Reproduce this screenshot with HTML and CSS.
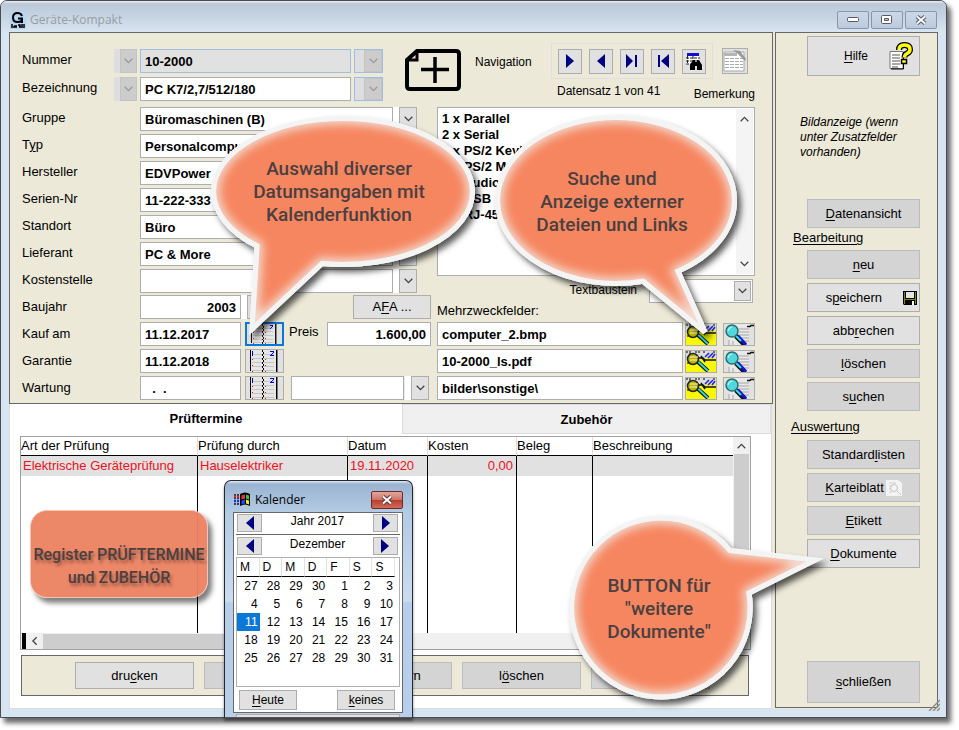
FILE: index.html
```html
<!DOCTYPE html>
<html lang="de">
<head>
<meta charset="utf-8">
<title>Geräte-Kompakt</title>
<link rel="stylesheet" href="styles.css">
</head>
<body>
<svg class="defs" aria-hidden="true">
  <symbol id="chev" viewBox="0 0 9 6"><path d="M.7.8 4.500 4.600 8.300.8" fill="none" stroke="currentColor" stroke-width="1.300"/></symbol>
  <symbol id="tri" viewBox="0 0 8 14"><path d="M0 0 8 7 0 14z" fill="#000082"/></symbol>
  <symbol id="book" viewBox="0 0 31 22" shape-rendering="crispEdges">
    <path d="M2 0h26v22H2z" fill="#e6e6e6"/>
    <path d="M3 4.500h22M3 8.500h22M3 12.500h22M3 16.500h22M3 20.500h22" stroke="#c4c4c4"/>
    <path d="M1.500 0v21M27.500 0v22" stroke="#000"/><path d="M28.500 0v22" stroke="#777"/>
    <path d="M13.500 0v22" stroke="#000" stroke-dasharray="2 2"/><path d="M14.500 2v20" stroke="#000" stroke-dasharray="2 2"/>
    <path d="M3.500 9v13M16.500 9v13" stroke="#e01818" stroke-dasharray="1 5"/>
    <path d="M3.500 1v5" stroke="#00f"/><path d="M21 1h4v1h-4zM24 2h1v1h-1zM23 3h1v1h-1zM22 4h1v1h-1zM21 5h4v1h-4z" fill="#0000f0"/>
  </symbol>
  <symbol id="find" viewBox="0 0 30 21">
    <rect width="30" height="21" fill="#f8f800"/><path d="M0 0h30v7H16l-4 3H0z" fill="#dcdcdc"/>
    <path d="M0 1h6M9 1h5M17 1h2M27 1h3M1 12h3M3 3h2" stroke="#000" stroke-dasharray="2 1"/>
    <circle cx="7" cy="8" r="5.500" fill="#b9b500" stroke="#222" stroke-width="1.500"/>
    <path d="M4 6h8M4 9h7" stroke="#f6f6d0"/><path d="M13 7h4l2 2h11M15 5l4 6" stroke="#111" fill="none" stroke-width="1.500"/>
    <path d="m12 11 10 9" stroke="#111" stroke-width="4"/><path d="m12.500 11 9.500 9" stroke="#35d6d6" stroke-width="2"/>
    <path d="m19 6 4-4M22 7l5-5M26 7l3-4" stroke="#2222d8" stroke-width="1.500"/>
  </symbol>
  <symbol id="view" viewBox="0 0 30 21">
    <path d="M5 0h20v21H5z" fill="#e9e9e9"/>
    <path d="M14 5h11M15 8h10M15 11h10M17 14h8M20 17h5M5 16v5M9 17v4" stroke="#a5a5a5"/>
    <path d="M23 2.500h3l1-1h3" stroke="#111" stroke-width="1.500" fill="none"/>
    <path d="m12 12 9 9" stroke="#111" stroke-width="5"/><path d="m14 12 8 9" stroke="#1414e0" stroke-width="3"/><path d="m12 12 5 5" stroke="#35e0e0" stroke-width="2"/>
    <circle cx="8" cy="7" r="6" fill="#52d8dc" stroke="#2b6d70" stroke-width="1.500"/><path d="M4 7q1-4 4-4" stroke="#d9ffff" fill="none"/>
  </symbol>
</svg>

<div class="stage">
<main class="window">
  <header class="titlebar">
    <svg class="app-icon" viewBox="0 0 16 18"><path d="M0 1h16v17H0z" fill="#b4d6f4"/><path d="M12 5Q11 2 7.500 2 3 2 3 6.500T7.500 11Q12 11 12 7.500H8M12 7v5" fill="none" stroke="#000" stroke-width="2"/><path d="M1 14h2M4 15h3M8 14h2v2M11 14h4M1 16h6M9 16h6" stroke="#000" stroke-width="1.500"/></svg>
    <h1>Geräte-Kompakt</h1>
    <div class="winbtns">
      <button aria-label="Minimieren"><svg width="12" height="6"><rect x=".5" y=".5" width="11" height="4" rx="1" fill="#fff" stroke="#555a66"/></svg></button>
      <button aria-label="Maximieren"><svg width="12" height="10"><rect x=".5" y=".5" width="10" height="8" rx="1" fill="#fff" stroke="#555a66"/><path d="M3.500 3.500h4v2h-4z" fill="#b8c6d8" stroke="#555a66"/></svg></button>
      <button aria-label="Schließen"><svg width="12" height="10" viewBox="0 0 12 10"><path d="m2 1.500 8 7m0-7-8 7" stroke="#555a66" stroke-width="4"/><path d="m2 1.500 8 7m0-7-8 7" stroke="#fff" stroke-width="1.800"/></svg></button>
    </div>
  </header>

  <div class="client">
    <div class="main">
      <section class="form">
        <div class="top">
          <div class="ident">
            <label for="nummer">Nummer</label>
            <span class="drop off"><select aria-label="Nummernliste"></select><svg><use href="#chev"/></svg></span>
            <input id="nummer" class="focus" value="10-2000">
            <span class="drop off blue"><select aria-label="Nummer wählen"></select><svg><use href="#chev"/></svg></span>
            <label for="bez">Bezeichnung</label>
            <span class="drop off"><select aria-label="Bezeichnungsliste"></select><svg><use href="#chev"/></svg></span>
            <input id="bez" value="PC K7/2,7/512/180">
            <span class="drop off blue"><select aria-label="Bezeichnung wählen"></select><svg><use href="#chev"/></svg></span>
          </div>
          <svg class="newcard" viewBox="0 0 56 42"><path d="M12 2h39q3 0 3 3v32q0 3-3 3H5q-3 0-3-3V11z" fill="none" stroke="#000" stroke-width="4"/><path d="M3 11h9V3" fill="none" stroke="#000" stroke-width="3"/><path d="M16 20.500h28M30 8v26" stroke="#000" stroke-width="3.500"/></svg>
          <span class="navlabel">Navigation</span>
          <div class="nav">
            <div class="navrow">
              <div class="navbox">
                <button aria-label="Vor"><svg width="8" height="14"><use href="#tri"/></svg></button>
                <button aria-label="Zurück"><svg class="flip" width="8" height="14"><use href="#tri"/></svg></button>
                <button aria-label="Letzter"><svg width="12" height="14"><path d="M0 0 7 7 0 14zM9 1h2v12H9z" fill="#000082"/></svg></button>
                <button aria-label="Erster"><svg width="12" height="14"><path d="M12 0 4 7l8 7zM1 1h2v12H1z" fill="#000082"/></svg></button>
                <button aria-label="Suchen"><svg width="18" height="17" viewBox="0 0 18 17"><path d="M2 1h12v10H1z" fill="#fff"/><path d="M2 0h12v3H2z" fill="#11c"/><path d="M1 5h14M1 8h12M1 11h6M2.500 3v8M8 3v5" stroke="#222" stroke-dasharray="3 1"/><path d="M5 17v-5l3-5h2v2h2V7h2l3 5v5h-5v-4h-2v4z"/></svg></button>
              </div>
              <button class="notebtn" aria-label="Bemerkung"><svg width="24" height="24" viewBox="0 0 24 24"><path d="M1 3h20v19H1z" fill="#fff" stroke="#a7a7a7"/><path d="M1 4h13v3H1z" fill="#b5b5b5"/><path d="M2 9.500h18M2 12.500h18M2 15.500h18M2 18.500h18" stroke="#aaa" stroke-dasharray="4 1"/><path d="m10 1 7 1 6 8-1 2-7-7z" fill="#999"/></svg></button>
            </div>
            <div class="navtext"><span>Datensatz 1 von 41</span><span class="bem">Bemerkung</span></div>
          </div>
        </div>

        <div class="fields">
          <div class="left">
            <div class="row"><label for="f1">Gruppe</label><input id="f1" class="wide" value="Büromaschinen (B)"><span class="drop"><select aria-label="Gruppen"></select><svg><use href="#chev"/></svg></span></div>
            <div class="row"><label for="f2">T<u>y</u>p</label><input id="f2" class="wide" value="Personalcomputer"><span class="drop"><select aria-label="Typen"></select><svg><use href="#chev"/></svg></span></div>
            <div class="row"><label for="f3">Hersteller</label><input id="f3" class="wide" value="EDVPower"><span class="drop"><select aria-label="Herstellerliste"></select><svg><use href="#chev"/></svg></span></div>
            <div class="row"><label for="f4">Serien-Nr</label><input id="f4" class="wide" value="11-222-333"></div>
            <div class="row"><label for="f5">Standort</label><input id="f5" class="wide" value="Büro"><span class="drop"><select aria-label="Standorte"></select><svg><use href="#chev"/></svg></span></div>
            <div class="row"><label for="f6">Lieferant</label><input id="f6" class="wide" value="PC &amp; More"><span class="drop"><select aria-label="Lieferanten"></select><svg><use href="#chev"/></svg></span></div>
            <div class="row last"><label for="f7">Kostenstelle</label><input id="f7" class="wide" value=""><span class="drop"><select aria-label="Kostenstellen"></select><svg><use href="#chev"/></svg></span></div>
            <div class="row low"><label for="f8">Baujahr</label><input id="f8" class="short num" value="2003"><span class="drop"><select aria-label="Baujahre"></select><svg><use href="#chev"/></svg></span><button class="afa">A<u>F</u>A ...</button></div>
            <div class="row low"><label for="f9">Kauf am</label><input id="f9" class="short" value="11.12.2017"><button class="cal on" aria-label="Kalender Kauf"><svg><use href="#book"/></svg></button><label class="preis" for="preis">Preis</label><input id="preis" class="num price" value="1.600,00"></div>
            <div class="row low"><label for="f10">Garantie</label><input id="f10" class="short" value="11.12.2018"><button class="cal" aria-label="Kalender Garantie"><svg><use href="#book"/></svg></button></div>
            <div class="row low"><label for="f11">Wartung</label><input id="f11" class="short" value="  .  ."><button class="cal" aria-label="Kalender Wartung"><svg><use href="#book"/></svg></button><span class="interval"><input aria-label="Intervall" value=""><span class="drop"><select aria-label="Intervalle"></select><svg><use href="#chev"/></svg></span></span></div>
          </div>
          <div class="right">
            <div class="memo">
              <textarea aria-label="Bemerkung">1 x Parallel
2 x Serial
1 x PS/2 Keyboard
1 x PS/2 Maus
1 x Audio
2 x USB
1 x RJ-45</textarea>
              <div class="vbar"><svg class="flipv"><use href="#chev"/></svg><svg><use href="#chev"/></svg></div>
            </div>
            <div class="baustein"><label for="tb">Textbaustein</label><span class="combo"><select id="tb"></select><i><svg><use href="#chev"/></svg></i></span></div>
            <span class="mz">Mehrzweckfelder:</span>
            <div class="row file"><input aria-label="Mehrzweckfeld 1" value="computer_2.bmp"><button aria-label="Suchen"><svg><use href="#find"/></svg></button><button aria-label="Anzeigen"><svg><use href="#view"/></svg></button></div>
            <div class="row file"><input aria-label="Mehrzweckfeld 2" value="10-2000_ls.pdf"><button aria-label="Suchen"><svg><use href="#find"/></svg></button><button aria-label="Anzeigen"><svg><use href="#view"/></svg></button></div>
            <div class="row file"><input aria-label="Mehrzweckfeld 3" value="bilder\sonstige\"><button aria-label="Suchen"><svg><use href="#find"/></svg></button><button aria-label="Anzeigen"><svg><use href="#view"/></svg></button></div>
          </div>
        </div>
      </section>

      <section class="tabs">
        <div class="tablist"><button class="tab active">Prüftermine</button><button class="tab">Zubehör</button></div>
        <div class="gridbox">
          <div class="gridtop">
            <table class="tests">
              <colgroup><col class="c1"><col class="c2"><col class="c3"><col class="c4"><col class="c5"><col></colgroup>
              <thead><tr><th>Art der Prüfung</th><th>Prüfung durch</th><th>Datum</th><th>Kosten</th><th>Beleg</th><th>Beschreibung</th></tr></thead>
              <tbody><tr class="hit"><td>Elektrische Geräteprüfung</td><td>Hauselektriker</td><td>19.11.2020</td><td class="r">0,00</td><td></td><td></td></tr>
              <tr class="fill"><td></td><td></td><td></td><td></td><td></td><td></td></tr></tbody>
            </table>
            <div class="vscroll"><svg class="flipv"><use href="#chev"/></svg><div></div></div>
          </div>
          <div class="hscroll"><b></b><svg><use href="#chev"/></svg><div></div></div>
        </div>
        <div class="actions"><button>dru<u>c</u>ken</button><button class="dim"><u>n</u>eu</button><button class="dim">s<u>p</u>eichern</button><button class="dim">l<u>ö</u>schen</button><button class="dim" aria-label="Weitere"></button></div>
      </section>
    </div>

    <aside class="side">
      <button class="sb help"><span><u>H</u>ilfe</span><svg width="24" height="28" viewBox="0 0 24 28"><path d="M1 9.500h13v17H1z" fill="#fff" stroke="#777"/><path d="M3 13h8M3 16h8M3 19h8M3 22h8M3 25h6" stroke="#555"/><path d="M14.500 10v17H2" fill="none" stroke="#000"/><path d="M10 8Q10 3 15.500 3T21 7.500Q21 10 18 11.500 15.500 12.500 15.500 15.500" fill="none" stroke="#000" stroke-width="6"/><path d="M10 8Q10 3 15.500 3T21 7.500Q21 10 18 11.500 15.500 12.500 15.500 15.500" fill="none" stroke="#ff0" stroke-width="3.500"/><path d="M12.500 17.500h5v4h-5z" fill="#ff0" stroke="#000" stroke-width="1.500"/></svg></button>
      <p class="hint">Bildanzeige (wenn unter Zusatzfelder vorhanden)</p>
      <button class="sb dim"><span><u>D</u>atenansicht</span></button>
      <h2>Bearbeitung</h2>
      <div class="stack">
        <button class="sb dim"><span><u>n</u>eu</span></button>
        <button class="sb save"><span>s<u>p</u>eichern</span><svg width="14" height="14" viewBox="0 0 14 14"><path d="M0 0h14v14H1l-1-1z"/><path d="M1 1h1v12H1zM12 1h1v12h-1z" fill="#8a8500"/><path d="M3 1h8v6H3z" fill="#e4e4e4"/><path d="M1 8h12v1H1z" fill="#8a8500"/><path d="M9 10h2v4H9z" fill="#fff"/></svg></button>
        <button class="sb"><span>abb<u>r</u>echen</span></button>
        <button class="sb dim"><span><u>l</u>öschen</span></button>
        <button class="sb dim"><span>s<u>u</u>chen</span></button>
      </div>
      <h2>Auswertung</h2>
      <div class="stack">
        <button class="sb dim"><span>Standard<u>l</u>isten</span></button>
        <button class="sb dim"><span><u>K</u>arteiblatt</span><svg width="16" height="16" viewBox="0 0 16 16"><path d="M0 0h12l4 3v13H0z" fill="#f3f3f3"/><path d="M3 3h7M3 6h3M3 9h2M3 12h3" stroke="#cfcfcf"/><circle cx="8" cy="8" r="3.500" fill="none" stroke="#c5c5c5"/><path d="m11 11 4 4" stroke="#c5c5c5"/></svg></button>
        <button class="sb dim"><span><u>E</u>tikett</span></button>
        <button class="sb"><span><u>D</u>okumente</span></button>
      </div>
      <button class="sb dim close"><span><u>s</u>chließen</span></button>
    </aside>
  </div>
  <svg class="grip" viewBox="0 0 12 12"><path d="M1 12 12 1M5 12l7-7M9 12l3-3" stroke="#8d8d86" stroke-width="1.500"/></svg>
</main>

<section class="dialog" role="dialog" aria-label="Kalender">
  <header><svg width="17" height="15" viewBox="0 0 17 15"><path d="M0 3h6M0 6h6M0 12h6" stroke="#111" stroke-dasharray="2 1" stroke-width="1.500"/><path d="M0 4.500h6" stroke="#e22" stroke-dasharray="2 1" stroke-width="2"/><path d="M0 9h6" stroke="#22e" stroke-dasharray="2 1" stroke-width="2.500"/><path d="M6 2q5-3 10 0v12q-5-3-10 0z"/><path d="M7.500 3.500 11 2.500v4l-3.500 1z" fill="#e33"/><path d="m12 2.500 3 1v4l-3-1z" fill="#3c3"/><path d="m7.500 8.500 3.500-1v4l-3.500 1z" fill="#24f"/><path d="m12 7.500 3 1v4l-3-1z" fill="#ee2"/></svg><h2>Kalender</h2><button aria-label="Schließen"><svg width="12" height="10" viewBox="0 0 12 10"><path d="m2 1.500 8 7m0-7-8 7" stroke="#5a3a3a" stroke-width="4"/><path d="m2 1.500 8 7m0-7-8 7" stroke="#fff" stroke-width="2"/></svg></button></header>
  <div class="calbody">
    <div class="pick"><button aria-label="Jahr zurück"><svg class="flip" width="8" height="14"><use href="#tri"/></svg></button><span>Jahr 2017</span><button aria-label="Jahr vor"><svg width="8" height="14"><use href="#tri"/></svg></button></div>
    <div class="pick month"><button aria-label="Monat zurück"><svg class="flip" width="8" height="14"><use href="#tri"/></svg></button><span>Dezember</span><button aria-label="Monat vor"><svg width="8" height="14"><use href="#tri"/></svg></button></div>
    <div class="calgrid">
      <table>
        <thead><tr><th>M</th><th>D</th><th>M</th><th>D</th><th>F</th><th>S</th><th>S</th></tr></thead>
        <tbody>
        <tr><td>27</td><td>28</td><td>29</td><td>30</td><td>1</td><td>2</td><td>3</td></tr>
        <tr><td>4</td><td>5</td><td>6</td><td>7</td><td>8</td><td>9</td><td>10</td></tr>
        <tr><td class="sel">11</td><td>12</td><td>13</td><td>14</td><td>15</td><td>16</td><td>17</td></tr>
        <tr><td>18</td><td>19</td><td>20</td><td>21</td><td>22</td><td>23</td><td>24</td></tr>
        <tr><td>25</td><td>26</td><td>27</td><td>28</td><td>29</td><td>30</td><td>31</td></tr>
        </tbody>
      </table>
    </div>
    <div class="calbtns"><button><u>H</u>eute</button><button><u>k</u>eines</button></div>
  </div>
  <div class="strip"></div>
</section>

<svg class="bubbles" viewBox="0 0 959 730" aria-hidden="true">
  <defs>
    <filter id="sh" x="-20%" y="-20%" width="150%" height="150%"><feDropShadow dx="4" dy="5" stdDeviation="3" flood-color="#000" flood-opacity=".65"/></filter>
    <filter id="bl" x="-20%" y="-20%" width="140%" height="140%"><feGaussianBlur stdDeviation="5"/></filter>
    <path id="p1" d="M257 246 252 329 322 263.500A129.500 73 0 0 0 472.500 191.500 129.500 73 0 0 0 343 118.500 129.500 73 0 0 0 213.500 191.500 129.500 73 0 0 0 257 246Z"/>
    <path id="p2" d="M643 281.300 705 332 678 271.200A118.500 83 0 0 0 734.500 200.500 118.500 83 0 0 0 616 117.500 118.500 83 0 0 0 497.500 200.500 118.500 83 0 0 0 643 281.300Z"/>
    <path id="p3" d="M730 550.500 815 560 749 593A89.500 89.500 0 0 1 661 697 89.500 89.500 0 0 1 571.500 607.500 89.500 89.500 0 0 1 661 518 89.500 89.500 0 0 1 730 550.500Z"/>
    <clipPath id="k1"><use href="#p1"/></clipPath><clipPath id="k2"><use href="#p2"/></clipPath><clipPath id="k3"><use href="#p3"/></clipPath>
  </defs>
  <g fill="#f68660">
    <use href="#p1" filter="url(#sh)" stroke="#f4f4f4" stroke-width="5"/><use href="#p2" filter="url(#sh)" stroke="#f4f4f4" stroke-width="5"/><use href="#p3" filter="url(#sh)" stroke="#f4f4f4" stroke-width="5"/>
  </g>
  <g fill="none" stroke="#f3dcd2" stroke-width="12">
    <g clip-path="url(#k1)"><use href="#p1" filter="url(#bl)"/></g><g clip-path="url(#k2)"><use href="#p2" filter="url(#bl)"/></g><g clip-path="url(#k3)"><use href="#p3" filter="url(#bl)"/></g>
  </g>
  <g fill="none" stroke="#f4f4f4" stroke-width="5"><use href="#p1"/><use href="#p2"/><use href="#p3"/></g>
</svg>
<p class="note n1">Auswahl diverser<br>Datumsangaben mit<br>Kalenderfunktion</p>
<p class="note n2">Suche und<br>Anzeige externer<br>Dateien und Links</p>
<p class="note n3">BUTTON für<br>"weitere<br>Dokumente"</p>
<p class="note n4">Register PRÜFTERMINE<br>und ZUBEHÖR</p>
</div>
</body>
</html>
```

FILE: styles.css
```css
* { box-sizing: border-box; }
body { margin: 0; background: #fff; font: 13px/16px "Liberation Sans", Arial, sans-serif; color: #000; }
h1, h2, p { margin: 0; font: inherit; }
input, textarea, select, button { font: inherit; color: inherit; margin: 0; border-radius: 0; }
svg { display: block; flex: none; }
.defs { position: absolute; width: 0; height: 0; }
.flip { transform: scaleX(-1); }
.flipv { transform: scaleY(-1); }
button { background: #e1e1e1; border: 1px solid #adadad; padding: 0; display: flex; align-items: center; justify-content: center; white-space: pre; }
u { text-underline-offset: 2px; }

.stage { position: relative; min-height: 100vh; padding: 0 12px 12px 0; display: flex; }
.window { position: relative; flex: 1; display: flex; flex-direction: column; border: 1px solid #4b4b52; border-radius: 7px 7px 0 0; background: #d7e4f2; box-shadow: 4px 5px 5px rgba(0,0,0,.6); }
.titlebar { height: 31px; display: flex; align-items: center; padding: 6px 9px 0; border-radius: 6px 6px 0 0; background: linear-gradient(#e6edf4, #bac8d8 3px, #c6d4e2 50%, #d8e4f0); }
.app-icon { width: 16px; height: 18px; }
h1 { flex: 1; margin-left: 4px; font: 12px/16px "Open Sans", sans-serif; color: #989da5; }
.winbtns { display: flex; gap: 2px; }
.winbtns button { width: 32px; height: 18px; background: linear-gradient(#cbd8e6, #bccbdc); border-color: #8795b0; border-radius: 2px; }
.client { flex: 1; display: flex; gap: 2px; margin: 0 8px 8px; background: #ece9d8; }
.main { flex: 1; min-width: 0; display: flex; flex-direction: column; }
.form { border: 1px solid #68686a; padding: 10px 17px 3px 12px; }
.top { display: flex; height: 64px; }
.ident { display: grid; grid-template: 24px 24px / 89px 23px 211px 29px; column-gap: 3px; row-gap: 4px; margin-top: 6px; }
.form label, .navlabel, .mz { white-space: nowrap; }
.ident label { padding-top: 3px; }
.form input, .form textarea { background: #fff; border: 1px solid #abadb3; font-weight: bold; padding: 0 4px; min-width: 0; height: 24px; outline: none; }
.form input.focus { background: #e1e1e1; border-color: #9ebfe4; }
.drop { display: grid; width: 24px; height: 24px; background: #fff; padding-left: 6px; }
.drop select, .drop svg, .combo select, .combo i { grid-area: 1 / 1; }
select { appearance: none; width: 100%; height: 100%; background: #e1e1e1; border: 1px solid #adadad; padding: 0; }
.drop svg, .combo svg { width: 9px; height: 6px; place-self: center; pointer-events: none; color: #444; }
.drop.off { background: #dedee0; width: auto; }
.drop.off select { background: #ccc; border-color: #c4c4c4; }
.drop.off svg { color: #999; }
.drop.blue { border: 1px solid #9ebfe4; padding-left: 9px; }
.newcard { width: 56px; height: 42px; margin: 6px 0 0 22px; }
.navlabel { width: 76px; margin: 11px 0 0 14px; flex: none; font-size: 12px; }
.nav { flex: 1; font-size: 12px; }
.navrow { display: flex; gap: 9px; }
.navbox { display: flex; gap: 7px; align-items: center; height: 36px; padding: 0 6px; border: 1px solid #dfdfdf; }
.navbox button { width: 24px; height: 25px; }
.notebtn { width: 26px; height: 26px; margin-top: 5px; }
.navtext { display: flex; justify-content: space-between; padding: 4px 0 0 6px; }
.bem { padding-top: 3px; }
.fields { display: flex; gap: 6px; }
.left { width: 409px; flex: none; display: flex; flex-direction: column; gap: 3px; }
.row { display: flex; align-items: center; height: 24px; }
.row.last { margin-bottom: -1px; }
.row > label:first-child { width: 118px; padding-bottom: 3px; }
.row.low > label:first-child { padding-bottom: 0; }
.wide { width: 253px; }
.short { width: 101px; }
.num { text-align: right; }
.afa { width: 78px; height: 24px; margin-left: auto; }
.cal { width: 39px; height: 24px; margin-left: 4px; }
.cal svg { width: 31px; height: 22px; }
.cal.on { border: 2px solid #0a78d7; }
.cal.on svg { height: 20px; }
.preis { margin-left: 5px; padding-bottom: 4px; }
.price { width: 104px; margin-left: auto; }
.interval { display: flex; margin-left: 7px; gap: 1px; }
.interval input { width: 113px; }
.right { flex: 1; min-width: 0; display: flex; flex-direction: column; gap: 3px; }
.memo { display: flex; height: 169px; background: #fff; border: 1px solid #abadb3; }
.memo textarea { flex: 1; height: auto; border: 0; resize: none; overflow: hidden; padding: 3px 4px; line-height: 16px; }
.vbar { width: 17px; display: flex; flex-direction: column; justify-content: space-between; align-items: center; padding: 7px 0; margin: 1px; background: #f4f4f4; color: #444; }
.vbar svg { width: 9px; height: 6px; }
.baustein { display: flex; justify-content: flex-end; align-items: center; gap: 12px; height: 24px; padding-right: 2px; }
.baustein label { font-size: 12px; padding-bottom: 2px; }
.combo { display: grid; width: 104px; height: 24px; }
.combo select { background: #fff; border-color: #abadb3; }
.combo i { display: grid; width: 17px; height: 20px; border: 1px solid #adadad; background: #e1e1e1; place-self: center end; margin-right: 2px; pointer-events: none; }
.mz { height: 13px; line-height: 10px; }
.file input { flex: 1; }
.file button { width: 32px; height: 23px; margin-left: 2px; }
.file button + button { margin-left: 6px; }
.file svg { width: 30px; height: 21px; }

.tabs { flex: 1; display: flex; flex-direction: column; background: #fff; border: 1px solid #dcdcd8; border-top: 0; padding: 0 0 12px; margin-right: 1px; }
.tablist { display: flex; height: 32px; padding-bottom: 2px; }
.tab { flex: 1; border: 0; background: #fff; font-weight: bold; }
.tab:not(.active) { flex: 0 0 369px; background: #f0f0f0; border: 1px solid #dcdcdc; padding-top: 2px; }
.gridbox { flex: 1; display: flex; flex-direction: column; margin: 0 20px 5px 10px; border: 1px solid #a0a0a0; }
.gridtop { flex: 1; display: flex; }
.tests { flex: 1; table-layout: fixed; border-collapse: separate; border-spacing: 0; height: 100%; }
.c1 { width: 177px; } .c2 { width: 150px; } .c3 { width: 80px; } .c4 { width: 89px; } .c5 { width: 76px; }
.tests th { height: 19px; padding: 0; text-align: left; font-weight: normal; border-bottom: 1px solid #000; border-right: 1px solid #e0e0e0; white-space: nowrap; }
.tests td { height: 20px; padding: 0 2px; border-right: 1px solid #000; color: #f01020; white-space: nowrap; }
.tests td:last-child, .tests th:last-child { border-right: 0; }
.tests .fill td { height: auto; }
.hit td { background: #e1e1e1; }
.tests .r { text-align: right; padding-right: 3px; }
.vscroll { width: 17px; display: flex; flex-direction: column; align-items: center; background: #f0f0f0; color: #444; padding: 6px 1px 0; }
.vscroll svg, .hscroll svg { width: 9px; height: 6px; }
.vscroll div { width: 15px; flex: 1; margin-top: 5px; background: #cdcdcd; }
.hscroll { display: flex; align-items: center; height: 16px; background: #f0f0f0; padding-left: 1px; color: #444; }
.hscroll b { width: 4px; height: 16px; background: #000; }
.hscroll svg { transform: rotate(90deg); margin: 0 4px; }
.hscroll div { width: 186px; height: 15px; background: #cdcdcd; }
.actions { display: flex; gap: 10px; height: 41px; align-items: center; margin: 0 22px 0 11px; padding-left: 53px; background: #ece9d8; border: 1px solid #68686a; }
.actions button { width: 119px; height: 27px; flex: none; }
.dim { background: #d4d4d4; border-color: #bcbcbc; }

.side { width: 163px; flex: none; display: flex; flex-direction: column; border: 1px solid #68686a; padding: 3px 17px 4px 31px; margin-bottom: 1px; }
.sb { width: 100%; height: 29px; flex: none; gap: 2px; }
.sb.help { height: 40px; justify-content: flex-end; gap: 21px; padding-right: 6px; font-size: 12px; }
.hint { margin: 39px -6px 39px -7px; font: italic 12px/15px "Liberation Sans", Arial, sans-serif; }
.side h2 { margin: 2px 0 4px -14px; text-decoration: underline; text-underline-offset: 2px; }
.stack { display: flex; flex-direction: column; gap: 4px; }
.stack + h2 { margin: 8px 0 5px -16px; }
.save { justify-content: flex-end; gap: 21px; padding-right: 2px; }
.close { height: 42px; margin-top: auto; }
.grip { position: absolute; right: 6px; bottom: 6px; width: 12px; height: 12px; }

.dialog { position: absolute; left: 224px; top: 480px; width: 189px; height: 238px; display: flex; flex-direction: column; overflow: hidden; border: 1px solid #26282c; border-bottom-color: #555; border-radius: 7px 7px 0 0; padding: 0 9px 0 8px; background: linear-gradient(#dfeaf6, #9ab4d2 3px, #b4cbe4 32px, #cadcf0 120px, #b7cfea 122px); font-size: 12px; box-shadow: 0 3px 3px rgba(0,0,0,.4); }
.dialog header { display: flex; align-items: center; height: 31px; padding: 6px 0 0 1px; flex: none; }
.dialog h2 { flex: 1; margin-left: 4px; font: 12px/16px "Open Sans", sans-serif; }
.dialog header button { width: 32px; height: 18px; border-color: #6e2a24; border-radius: 2px; background: linear-gradient(#e2a79d, #cf7468 48%, #b83c2b 50%, #cf6d58); }
.calbody { border: 1px solid #68686a; background: #fff; padding: 1px 2px 0; height: 201px; flex: none; }
.pick { display: flex; justify-content: space-between; height: 21px; padding: 0 2px 0 1px; border-bottom: 1px solid #68686a; }
.pick button { width: 25px; height: 18px; }
.month { height: 22px; border: 0; padding-top: 2px; }
.pick span { line-height: 14px; }
.calgrid { height: 130px; border: 1px solid #b0b0b0; padding-right: 4px; }
.calgrid table { width: 100%; border-collapse: separate; border-spacing: 0; table-layout: fixed; }
.calgrid th { height: 19px; padding: 0 0 0 3px; text-align: left; font-weight: normal; border-bottom: 1px solid #000; border-right: 1px solid #e2e2e2; }
.calgrid td { height: 18px; padding: 0 2px 0 0; text-align: right; }
.calgrid .sel { background: #0a78d7; color: #fff; }
.calbtns { display: flex; justify-content: space-between; padding: 3px 5px 0 3px; }
.calbtns button { width: 58px; height: 20px; }
.strip { height: 10px; margin: 1px 3px 0; background: #e1e1e1; border: 1px solid #adadad; flex: none; }

.bubbles { position: absolute; left: 0; top: 0; width: 959px; height: 730px; pointer-events: none; }
.note { position: absolute; text-align: center; font: 500 19px/23px Roboto, "Liberation Sans", sans-serif; color: #4a4040; white-space: nowrap; }
.n1 { left: 239px; top: 157px; width: 200px; }
.n2 { left: 512px; top: 167px; width: 200px; }
.n3 { left: 579px; top: 574px; width: 160px; }
.n4 { left: 30px; top: 510px; width: 178px; height: 88px; padding-top: 32px; font-size: 16px; border-radius: 17px; background: rgba(235,130,98,.96); border: 1px solid #f3c4b4; box-shadow: 4px 5px 5px rgba(0,0,0,.5); text-shadow: 2px 3px 3px rgba(0,0,0,.35); }
```
